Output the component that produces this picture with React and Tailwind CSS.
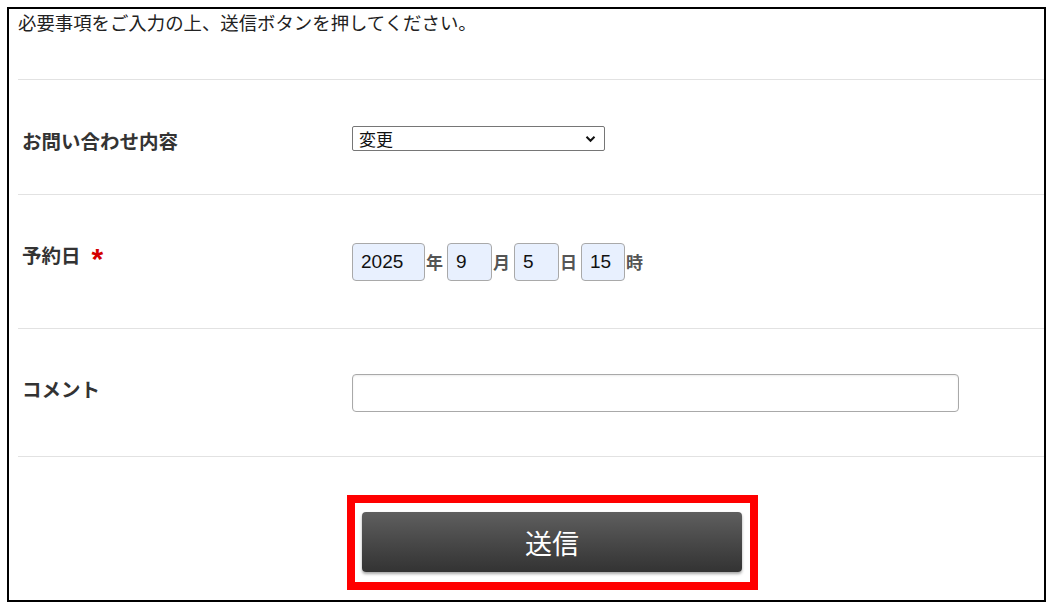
import React from 'react'

const jp = { fontFamily: '"Noto Sans CJK JP", "Noto Sans", sans-serif' }
const num = { fontFamily: '"Liberation Sans", "Noto Sans CJK JP", sans-serif' }

const DateBox = ({ value, w }) => (
    <div
        className={`h-[38px] ${w} rounded-[4px] border border-[#a9a9a9] bg-[#e8f0fe] pl-[8px] flex items-center text-[19px] text-[#111]`}
        style={num}
    >
        {value}
    </div>
)

const Unit = ({ children }) => (
    <span className="text-[17px] font-bold text-[#555] w-[22px] pl-[1px]">{children}</span>
)

const App = () => {
    return (
        <div className="w-[1052px] h-[608px] bg-white pt-[7px] pl-[7px]" style={jp}>
            <div className="w-[1039px] h-[595px] border-2 border-black pl-[9px] flex flex-col">
                {/* intro */}
                <div className="h-[71px] border-b border-[#e2e2e2] text-[18.4px] leading-[26px] text-[#222]">
                    必要事項をご入力の上、送信ボタンを押してください。
                </div>

                {/* お問い合わせ内容 */}
                <div className="flex h-[115px] border-b border-[#e2e2e2]">
                    <div className="w-[334px] pl-[4px] pt-[49px] text-[19.5px] leading-[24px] font-bold text-[#333]">
                        お問い合わせ内容
                    </div>
                    <div className="pt-[46px]">
                        <div className="relative w-[253px] h-[25px] border border-[#767676] rounded-[2px] bg-white flex items-center pl-[6px] text-[17px] text-[#111]">
                            変更
                            <svg className="absolute right-[8px] top-[8px]" width="11" height="8" viewBox="0 0 11 8">
                                <path d="M1.5 1.8 L5.5 5.8 L9.5 1.8" fill="none" stroke="#111" strokeWidth="2" />
                            </svg>
                        </div>
                    </div>
                </div>

                {/* 予約日 */}
                <div className="flex h-[134px] border-b border-[#e2e2e2]">
                    <div className="w-[334px] pl-[4px] pt-[48px] text-[19.5px] leading-[24px] font-bold text-[#333] flex items-start">
                        予約日
                        <span className="ml-[11px] mt-[1px] text-[#d40000] text-[30px] leading-[30px] font-bold" style={num}>*</span>
                    </div>
                    <div className="pt-[48px] flex items-center h-fit">
                        <DateBox value="2025" w="w-[73px]" />
                        <Unit>年</Unit>
                        <DateBox value="9" w="w-[45px]" />
                        <Unit>月</Unit>
                        <DateBox value="5" w="w-[45px]" />
                        <Unit>日</Unit>
                        <DateBox value="15" w="w-[44px]" />
                        <Unit>時</Unit>
                    </div>
                </div>

                {/* コメント */}
                <div className="flex h-[128px] border-b border-[#e2e2e2]">
                    <div className="w-[334px] pl-[4px] pt-[48px] text-[19.5px] leading-[24px] font-bold text-[#333]">
                        コメント
                    </div>
                    <div className="pt-[45px]">
                        <div className="w-[607px] h-[38px] border border-[#a9a9a9] rounded-[4px] bg-white shadow-[inset_0_1px_2px_rgba(0,0,0,0.08)]" />
                    </div>
                </div>

                {/* submit */}
                <div className="pt-[38px] pl-[329px]">
                    <div className="w-[411px] h-[95px] border-[8px] border-[#ff0000] pt-[9px] pl-[7px]">
                        <button className="w-[380px] h-[60px] rounded-[4px] bg-gradient-to-b from-[#5f5f5f] to-[#333333] shadow-[0_2px_3px_rgba(0,0,0,0.35)] text-white text-[27px] leading-none flex items-center justify-center">
                            送信
                        </button>
                    </div>
                </div>
            </div>
        </div>
    )
}

export default App
